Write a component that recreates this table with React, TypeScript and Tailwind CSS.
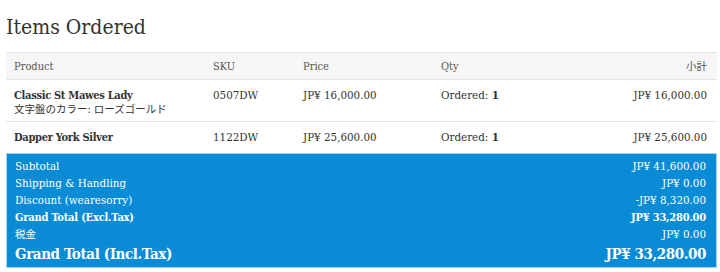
import React from 'react';

type Item = { name: string; option?: string; sku: string; price: string; qty: string; subtotal: string };

const items: Item[] = [
  {
    name: 'Classic St Mawes Lady',
    option: '文字盤のカラー: ローズゴールド',
    sku: '0507DW',
    price: 'JP¥ 16,000.00',
    qty: '1',
    subtotal: 'JP¥ 16,000.00',
  },
  { name: 'Dapper York Silver', sku: '1122DW', price: 'JP¥ 25,600.00', qty: '1', subtotal: 'JP¥ 25,600.00' },
];

const totals = [
  { label: 'Subtotal', value: 'JP¥ 41,600.00' },
  { label: 'Shipping & Handling', value: 'JP¥ 0.00' },
  { label: 'Discount (wearesorry)', value: '-JP¥ 8,320.00' },
  { label: 'Grand Total (Excl.Tax)', value: 'JP¥ 33,280.00', bold: true },
  { label: '税金', value: 'JP¥ 0.00', cjk: true },
];

const serif = "font-['DejaVu_Serif_Condensed','DejaVu_Serif','Noto_Sans_CJK_JP',serif] font-stretch-condensed";
const cols = 'grid grid-cols-[199px_90px_138px_1fr_auto] pl-2 pr-[10px]';

export default function App() {
  return (
    <div className={`${serif} w-[720px] h-[272px] overflow-hidden bg-white pl-[6px] text-[#333]`}>
      <h1 className="pt-[12px] text-[21px] leading-[30px] text-[#333]">Items Ordered</h1>

      <div className="mt-[10px] w-[711px]">
        <div className={`${cols} border-y border-[#e4e4e4] bg-[#f6f6f6] pt-[5px] pb-[4px] text-[11px] leading-[17px] text-[#555]`}>
          <span>Product</span>
          <span>SKU</span>
          <span>Price</span>
          <span>Qty</span>
          <span className="text-right text-[10.5px]">小計</span>
        </div>

        {items.map((it, i) => (
          <div
            key={it.sku}
            className={`${cols} pt-2 text-[11.5px] leading-[15px] ${i === 0 ? 'border-b border-[#e4e4e4] pb-[6px]' : 'pb-[8px]'}`}
          >
            <div>
              <p className="text-[11px] font-bold tracking-[-0.3px]">{it.name}</p>
              {it.option && <p className="text-[10.5px] leading-[12px]">{it.option}</p>}
            </div>
            <span>{it.sku}</span>
            <span>{it.price}</span>
            <span>
              Ordered: <b>{it.qty}</b>
            </span>
            <span className="text-right">{it.subtotal}</span>
          </div>
        ))}

        <div className="border border-[#a3d6f2] bg-[#0a8bd5] pl-2 pr-[10px] pt-[4px] pb-[2px] text-white">
          {totals.map((t) => (
            <div
              key={t.label}
              className={`flex justify-between leading-[17px] ${t.bold ? 'text-[11px] font-bold tracking-[-0.2px]' : 'text-[11.5px]'}`}
            >
              <span className={t.cjk ? 'text-[10.5px]' : ''}>{t.label}</span>
              <span>{t.value}</span>
            </div>
          ))}
          <div className="flex justify-between text-[15px] font-bold leading-[22px] tracking-[-0.4px]">
            <span>Grand Total (Incl.Tax)</span>
            <span>JP¥ 33,280.00</span>
          </div>
        </div>
      </div>
    </div>
  );
}
